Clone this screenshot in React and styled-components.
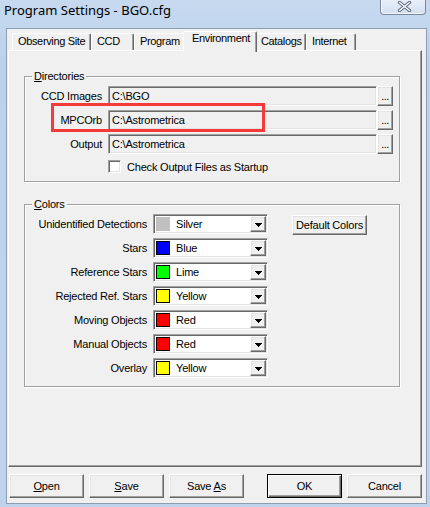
import React from 'react'
import styled, { createGlobalStyle, css } from 'styled-components'

const GlobalStyle = createGlobalStyle`
  html, body {
    margin: 0;
    padding: 0;
    background: #ffffff;
  }
  body {
    font-family: "Liberation Sans", Arial, sans-serif;
    font-size: 11px;
    letter-spacing: -0.2px;
    color: #000;
  }
`

const raised = css`
  border: 1px solid;
  border-color: #ffffff #696969 #696969 #ffffff;
  box-shadow: inset -1px -1px 0 #a0a0a0, inset 1px 1px 0 #e3e3e3;
`

const sunken = css`
  border: 1px solid;
  border-color: #a0a0a0 #ffffff #ffffff #a0a0a0;
  box-shadow: inset 1px 1px 0 #696969, inset -1px -1px 0 #e3e3e3;
`

const Window = styled.div`
  position: relative;
  width: 430px;
  height: 507px;
  display: flex;
  flex-direction: column;
  background: linear-gradient(#c6d9ef, #bcd2eb 60px, #bfd4ec);
  overflow: hidden;
`

const TitleBar = styled.div`
  height: 28px;
  flex: none;
  display: flex;
  justify-content: space-between;
  align-items: flex-start;
`

const Title = styled.div`
  font-family: "Noto Sans", "Open Sans", sans-serif;
  font-size: 13px;
  letter-spacing: 0;
  line-height: 18px;
  padding: 1px 0 0 4px;
  color: #000;
`

const CloseButton = styled.div`
  box-sizing: border-box;
  width: 46px;
  height: 15px;
  margin-right: 4px;
  border: 1px solid #7888a0;
  border-top: none;
  border-radius: 0 0 4px 4px;
  background: linear-gradient(#e8eff8, #d3dff0);
  box-shadow: inset 0 -1px 0 rgba(255, 255, 255, 0.7), inset 1px 0 0 rgba(255, 255, 255, 0.7);
  display: flex;
  align-items: center;
  justify-content: center;
  padding: 0 0 2px 3px;
`

const Client = styled.div`
  flex: 1;
  margin: 0 3px 3px 6px;
  border: 1px solid #8c9db4;
  background: #f0f0f0;
  display: flex;
  flex-direction: column;
  padding: 2px 4px 0 1px;
`

const TabStrip = styled.div`
  position: relative;
  z-index: 2;
  display: flex;
  align-items: flex-end;
  height: 19px;
  padding-left: 4px;
`

const Tab = styled.div`
  position: relative;
  box-sizing: border-box;
  flex: none;
  width: ${p => p.$w}px;
  height: ${p => (p.$active ? 21 : 17)}px;
  margin: ${p => (p.$active ? '0 -2px -2px -2px' : '0')};
  padding: ${p => (p.$active ? '0 0 0 8px' : '1px 0 0 5px')};
  line-height: 13px;
  letter-spacing: -0.35px;
  border: 1px solid;
  border-bottom: none;
  border-color: #ffffff #696969 transparent #ffffff;
  border-radius: 2px 2px 0 0;
  box-shadow: inset -1px 0 0 #a0a0a0;
  background: #f0f0f0;
  z-index: ${p => (p.$active ? 3 : 1)};
  white-space: nowrap;
  overflow: hidden;
`

const Panel = styled.div`
  position: relative;
  z-index: 1;
  box-sizing: border-box;
  height: 417px;
  border: 1px solid;
  border-color: #ffffff #696969 #696969 #ffffff;
  box-shadow: inset -1px -1px 0 #a0a0a0;
  padding: 25px 0 0 15px;
`

const GroupBox = styled.div`
  box-sizing: border-box;
  width: 376px;
  margin-top: ${p => p.$top || 0}px;
  border: 1px solid #a0a0a0;
  box-shadow: inset 1px 1px 0 #ffffff, 1px 1px 0 #ffffff;
  padding: 0 0 8px 0;
`

const GroupTitle = styled.div`
  width: fit-content;
  margin: -7px 0 0 7px;
  padding: 0 2px;
  line-height: 13px;
  background: #f0f0f0;
`

const Rows = styled.div`
  display: flex;
  flex-direction: column;
  gap: 4px;
  margin-top: 3px;
`

const Row = styled.div`
  display: flex;
  align-items: center;
  height: 20px;
`

const Label = styled.div`
  width: ${p => p.$w}px;
  margin-right: 6px;
  text-align: right;
  white-space: nowrap;
  flex: none;
`

const Field = styled.div`
  ${sunken};
  box-sizing: border-box;
  width: 269px;
  height: 20px;
  line-height: 18px;
  padding-left: 3px;
  background: #f0f0f0;
`

const DotsButton = styled.div`
  ${raised};
  box-sizing: border-box;
  width: 16px;
  height: 20px;
  text-align: center;
  line-height: 18px;
  letter-spacing: -0.5px;
  background: #f0f0f0;
`

const CheckRow = styled.div`
  display: flex;
  align-items: center;
  height: 13px;
  margin-top: 6px;
  padding-left: 83px;
  gap: 6px;
`

const CheckBox = styled.div`
  ${sunken};
  box-sizing: border-box;
  width: 13px;
  height: 13px;
  background: #ffffff;
`

const Combo = styled.div`
  ${sunken};
  box-sizing: border-box;
  width: 115px;
  height: 20px;
  display: flex;
  align-items: center;
  padding: 0 1px 0 2px;
  background: #ffffff;
`

const Swatch = styled.div`
  box-sizing: border-box;
  width: 14px;
  height: 14px;
  flex: none;
  background: ${p => p.$color};
  border: 1px solid ${p => (p.$color === '#c0c0c0' ? '#c0c0c0' : '#000')};
`

const ComboText = styled.span`
  margin-left: 6px;
  flex: 1;
`

const DropButton = styled.div`
  ${raised};
  box-sizing: border-box;
  width: 16px;
  height: 16px;
  background: #f0f0f0;
  display: flex;
  align-items: center;
  justify-content: center;
  padding-top: 1px;
`

const SmallButton = styled.div`
  ${raised};
  box-sizing: border-box;
  width: 75px;
  height: 20px;
  margin-left: 24px;
  align-self: flex-end;
  margin-bottom: -1px;
  line-height: 18px;
  text-align: center;
  background: #f0f0f0;
`

const ButtonRow = styled.div`
  display: flex;
  gap: 5px;
  margin-top: 7px;
  padding-left: 1px;
`

const Button = styled.div`
  ${raised};
  box-sizing: border-box;
  width: 75px;
  height: 24px;
  line-height: 22px;
  text-align: center;
  background: #f0f0f0;
  margin-left: ${p => p.$gap || 0}px;
  ${p => p.$default && css`
    border: 1px solid #000;
    box-shadow: inset 1px 1px 0 #ffffff, inset -1px -1px 0 #696969, inset -2px -2px 0 #a0a0a0;
  `}
`

const Highlight = styled.div`
  position: absolute;
  z-index: 10;
  left: 51px;
  top: 103px;
  width: 214px;
  height: 29px;
  box-sizing: border-box;
  border: 3px solid #f53a3a;
  pointer-events: none;
`

const Key = styled.span`
  text-decoration: underline;
  text-underline-offset: 1px;
`

const tabs = [
  { name: 'Observing Site', w: 79 },
  { name: 'CCD', w: 43 },
  { name: 'Program', w: 51 },
  { name: 'Environment', w: 74, active: true },
  { name: 'Catalogs', w: 51 },
  { name: 'Internet', w: 50 },
]

const dirs = [
  { label: 'CCD Images', value: 'C:\\BGO' },
  { label: 'MPCOrb', value: 'C:\\Astrometrica' },
  { label: 'Output', value: 'C:\\Astrometrica' },
]

const colors = [
  { label: 'Unidentified Detections', name: 'Silver', color: '#c0c0c0' },
  { label: 'Stars', name: 'Blue', color: '#0000ff' },
  { label: 'Reference Stars', name: 'Lime', color: '#00ff00' },
  { label: 'Rejected Ref. Stars', name: 'Yellow', color: '#ffff00' },
  { label: 'Moving Objects', name: 'Red', color: '#ff0000' },
  { label: 'Manual Objects', name: 'Red', color: '#ff0000' },
  { label: 'Overlay', name: 'Yellow', color: '#ffff00' },
]

function Arrow() {
  return (
    <svg width="7" height="4" viewBox="0 0 7 4" shapeRendering="crispEdges">
      <path d="M0 0h7v1H0zM1 1h5v1H1zM2 2h3v1H2zM3 3h1v1H3z" fill="#000" />
    </svg>
  )
}

function CloseGlyph() {
  return (
    <svg width="15" height="11" viewBox="0 0 15 11">
      <path d="M2.5 1.5l10 8M12.5 1.5l-10 8" stroke="#56647a" strokeWidth="3.4" strokeLinecap="round" />
      <path d="M2.5 1.5l10 8M12.5 1.5l-10 8" stroke="#ffffff" strokeWidth="1.6" strokeLinecap="round" />
    </svg>
  )
}

export default function App() {
  return (
    <Window>
      <GlobalStyle />
      <TitleBar>
        <Title>Program Settings - BGO.cfg</Title>
        <CloseButton><CloseGlyph /></CloseButton>
      </TitleBar>
      <Client>
        <TabStrip>
          {tabs.map(t => (
            <Tab key={t.name} $w={t.w} $active={t.active}>{t.name}</Tab>
          ))}
        </TabStrip>
        <Panel>
          <GroupBox>
            <GroupTitle><Key>D</Key>irectories</GroupTitle>
            <Rows>
              {dirs.map(d => (
                <Row key={d.label}>
                  <Label $w={77}>{d.label}</Label>
                  <Field>{d.value}</Field>
                  <DotsButton>...</DotsButton>
                </Row>
              ))}
            </Rows>
            <CheckRow>
              <CheckBox />
              <span>Check Output Files as Startup</span>
            </CheckRow>
          </GroupBox>
          <GroupBox $top={22}>
            <GroupTitle><Key>C</Key>olors</GroupTitle>
            <Rows>
              {colors.map((c, i) => (
                <Row key={c.label}>
                  <Label $w={122}>{c.label}</Label>
                  <Combo>
                    <Swatch $color={c.color} />
                    <ComboText>{c.name}</ComboText>
                    <DropButton><Arrow /></DropButton>
                  </Combo>
                  {i === 0 && <SmallButton>Default Colors</SmallButton>}
                </Row>
              ))}
            </Rows>
          </GroupBox>
        </Panel>
        <ButtonRow>
          <Button><Key>O</Key>pen</Button>
          <Button><Key>S</Key>ave</Button>
          <Button>Save <Key>A</Key>s</Button>
          <Button $default $gap={18}>OK</Button>
          <Button>Cancel</Button>
        </ButtonRow>
      </Client>
      <Highlight />
    </Window>
  )
}
